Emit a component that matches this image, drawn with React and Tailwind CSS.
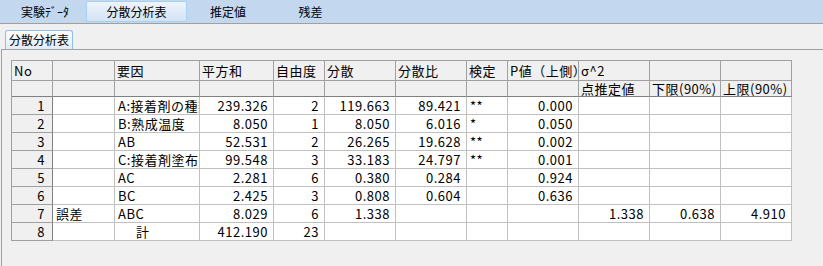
import React from "react";

const widths = [41, 62, 85, 74, 51, 71, 71, 41, 71, 71, 71, 71];
const align = ["r", "l", "l", "r", "r", "r", "r", "l", "r", "r", "r", "r"];

const header1 = ["No", "", "要因", "平方和", "自由度", "分散", "分散比", "検定", "P値（上側）", "σ^2", "", ""];
const header2 = ["", "", "", "", "", "", "", "", "", "点推定値", "下限(90%)", "上限(90%)"];

const rows = [
  ["1", "", "A:接着剤の種類", "239.326", "2", "119.663", "89.421", "**", "0.000", "", "", ""],
  ["2", "", "B:熟成温度", "8.050", "1", "8.050", "6.016", "*", "0.050", "", "", ""],
  ["3", "", "AB", "52.531", "2", "26.265", "19.628", "**", "0.002", "", "", ""],
  ["4", "", "C:接着剤塗布量", "99.548", "3", "33.183", "24.797", "**", "0.001", "", "", ""],
  ["5", "", "AC", "2.281", "6", "0.380", "0.284", "", "0.924", "", "", ""],
  ["6", "", "BC", "2.425", "3", "0.808", "0.604", "", "0.636", "", "", ""],
  ["7", "誤差", "ABC", "8.029", "6", "1.338", "", "", "", "1.338", "0.638", "4.910"],
  ["8", "", "計", "412.190", "23", "", "", "", "", "", "", ""],
];

function HeaderCell({ text, row, col }) {
  const clip = row === 0 && col === 8;
  return (
    <div
      className={
        "flex items-center bg-[#f0f0f0] border-r border-b whitespace-nowrap pl-[2px] " +
        (clip ? "overflow-hidden " : "") +
        (row === 1 ? "border-b-[#808080] border-r-[#a0a0a0]" : "border-[#a0a0a0]")
      }
    >
      {text}
    </div>
  );
}

function DataCell({ text, col, r }) {
  if (col === 0) {
    return (
      <div className="flex items-center justify-end bg-[#f0f0f0] border-r border-b border-r-[#808080] border-b-[#a0a0a0] pr-[7px] whitespace-nowrap">
        {text}
      </div>
    );
  }
  const isRight = align[col] === "r";
  const isTotal = r === 7 && col === 2;
  const clip = col === 2 && (r === 0 || r === 3);
  return (
    <div
      className={
        "flex items-center bg-white border-r border-b border-[#c0c0c0] whitespace-nowrap " +
        (clip ? "overflow-hidden " : "") +
        (isRight ? "justify-end pr-[5px]" : isTotal ? "pl-[21px]" : "pl-[3px]")
      }
    >
      {text}
    </div>
  );
}

export default function App() {
  return (
    <div className="w-[823px] h-[266px] bg-[#f0f0f0] overflow-hidden text-black font-['Noto_Sans_CJK_JP',sans-serif]">
      {/* top tab bar */}
      <div className="h-[24px] bg-[#c3d8ef] border-b border-[#a0a0a0] flex items-start pt-[1px] text-[12px] leading-none">
        <div className="w-[86px] h-[21px] flex items-center justify-center pl-[4px]">実験ﾃﾞｰﾀ</div>
        <div className="w-[101px] h-[21px] flex items-center justify-center rounded-[2px] border border-[#a6d2f2] bg-gradient-to-b from-[#eef4fb] to-[#d4e3f5]">
          分散分析表
        </div>
        <div className="w-[82px] h-[21px] flex items-center justify-center">推定値</div>
        <div className="w-[83px] h-[21px] flex items-center justify-center">残差</div>
      </div>

      {/* inner tab */}
      <div className="pt-[6px] pl-[5px] flex">
        <div className="w-[68px] h-[19px] rounded-t-[3px] border border-b-0 border-[#8fbfe9] bg-gradient-to-b from-[#fbfdff] to-[#e2ecf8] text-[12px] leading-none flex items-center justify-center">
          分散分析表
        </div>
      </div>

      {/* panel */}
      <div className="ml-[1px] h-[300px] border-t border-l border-[#a0a0a0] pt-[10px] pl-[9px]">
        <div
          className="grid w-fit border-l border-t border-l-[#a0a0a0] border-t-[#a0a0a0] text-[13px] leading-none tracking-[0.5px]"
          style={{
            gridTemplateColumns: widths.map((w) => w + "px").join(" "),
            gridTemplateRows: "20px 16px repeat(8, 18px)",
          }}
        >
          {header1.map((t, i) => (
            <HeaderCell key={"h1-" + i} text={t} row={0} col={i} />
          ))}
          {header2.map((t, i) => (
            <HeaderCell key={"h2-" + i} text={t} row={1} col={i} />
          ))}
          {rows.map((row, r) =>
            row.map((t, c) => <DataCell key={r + "-" + c} text={t} col={c} r={r} />)
          )}
        </div>
      </div>
    </div>
  );
}
